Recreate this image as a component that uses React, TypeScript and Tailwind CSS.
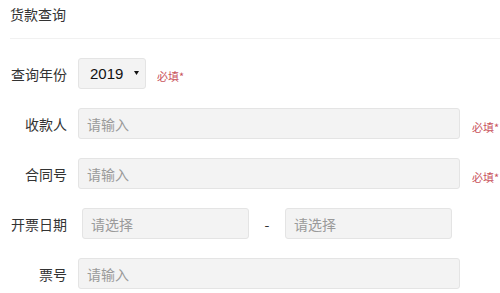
const font = "font-['Noto_Sans_CJK_SC','Noto_Sans',sans-serif]";

function Required() {
  return <span className="text-[11px] leading-none text-[#c8525b]">必填*</span>;
}

function Label({ text }: { text: string }) {
  return <div className="w-[56px] shrink-0 text-right text-[14px] leading-[20px] text-[#333]">{text}</div>;
}

function TextBox({ placeholder, className }: { placeholder: string; className: string }) {
  return (
    <div
      className={`flex h-[31px] items-center rounded-[3px] border border-[#e4e4e4] bg-[#f3f3f3] pl-[8px] text-[14px] leading-[20px] text-[#9a9a9a] ${className}`}
    >
      {placeholder}
    </div>
  );
}

export default function App() {
  return (
    <div className={`h-[293px] w-[500px] overflow-hidden bg-white ${font}`}>
      <div className="ml-[10px] h-[39px] border-b border-[#f1f1f1] pt-[4px] text-[14px] leading-[20px] text-[#333]">
        货款查询
      </div>

      <div className="mt-[19px] flex flex-col gap-[19px] pl-[11px]">
        <div className="flex items-center">
          <Label text="查询年份" />
          <div className="ml-[11px] flex h-[31px] w-[68px] items-center justify-between rounded-[3px] border border-[#e4e4e4] bg-[#f3f3f3] pl-[11px] pr-[6px]">
            <span className="font-['Liberation_Sans',sans-serif] text-[15px] leading-none text-[#111]">2019</span>
            <svg width="5" height="4" viewBox="0 0 5 4" className="mt-[-1px]">
              <path d="M0 0H5L2.5 4Z" fill="#111" />
            </svg>
          </div>
          <div className="ml-[11px] pt-[1px]">
            <Required />
          </div>
        </div>

        <div className="flex items-center">
          <Label text="收款人" />
          <TextBox placeholder="请输入" className="ml-[11px] w-[382px]" />
          <div className="ml-[12px] pt-[3px]">
            <Required />
          </div>
        </div>

        <div className="flex items-center">
          <Label text="合同号" />
          <TextBox placeholder="请输入" className="ml-[11px] w-[382px]" />
          <div className="ml-[12px] pt-[3px]">
            <Required />
          </div>
        </div>

        <div className="flex items-center">
          <Label text="开票日期" />
          <TextBox placeholder="请选择" className="ml-[15px] w-[167px]" />
          <div className="w-[36px] text-center text-[14px] leading-[20px] text-[#333]">-</div>
          <TextBox placeholder="请选择" className="w-[167px]" />
        </div>

        <div className="flex items-center">
          <Label text="票号" />
          <TextBox placeholder="请输入" className="ml-[11px] w-[382px]" />
        </div>
      </div>
    </div>
  );
}
